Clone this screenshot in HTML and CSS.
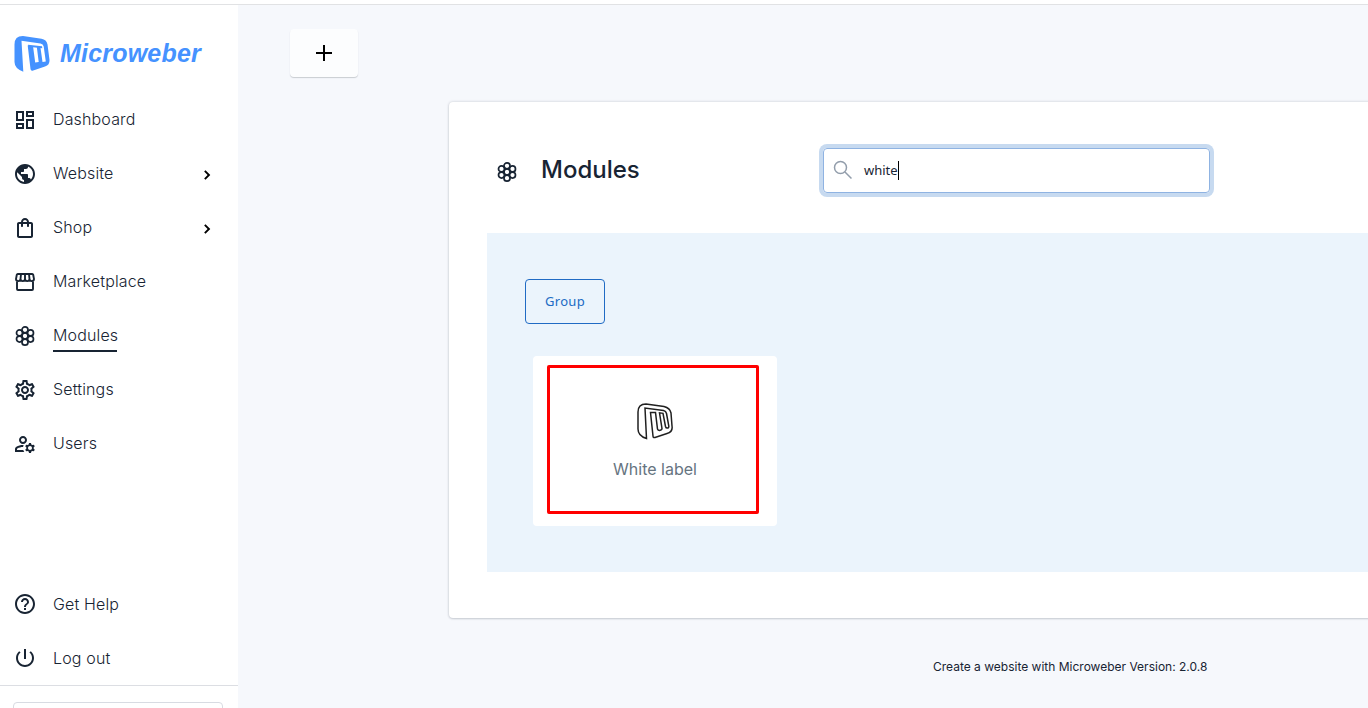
FILE: index.html
```html
<!DOCTYPE html>
<html lang="en">
<head>
<meta charset="utf-8">
<title>Modules - Microweber</title>
<link rel="stylesheet" href="styles.css">
</head>
<body>
<svg class="defs" aria-hidden="true">
  <symbol id="flower" viewBox="0 0 24 24"><g fill="none" stroke="currentColor" stroke-width="1.700"><circle cx="12" cy="12" r="3"/><circle cx="12" cy="5.850" r="3"/><circle cx="12" cy="18.150" r="3"/><circle cx="6.500" cy="8.900" r="3"/><circle cx="17.500" cy="8.900" r="3"/><circle cx="6.500" cy="15.100" r="3"/><circle cx="17.500" cy="15.100" r="3"/></g></symbol>
  <symbol id="chevron" viewBox="0 0 24 24"><path d="M8.200 16.600 12.800 12 8.200 7.400 10 5.600l6.400 6.400-6.400 6.400z"/></symbol>
  <symbol id="mark" viewBox="0 0 36 37"><path d="M9.500 35.500Q1 33 1 26V9Q1 1 9 1L27 3.500Q33 5 34 10L35 23Q36 29 30 30.500L18 34.500Q16 35 16 33L13.500 9.500H18.500L20.500 26Q21 27.500 22.500 27.500Q25 27 25 25.500L22.500 9.800L26 10.300L28.500 23.500Q29 25.500 31 25Q32 24.500 31.800 23L29.500 10.500Q29 8 26.500 7.500L8 5Z"/></symbol>
</svg>
<div class="topline"></div>
<div class="app">
  <aside class="sidebar">
    <div class="brand">
      <svg class="brand-mark" viewBox="0 0 36 37"><path d="M9.300 35.700Q.5 32.500.5 26V8.500Q.5 0 9 .1L27.500 2.700Q32.500 3.500 33.500 8.500L35.500 24Q35.800 29 31 30.500L18.500 34.700Q16.700 35 16.500 33L13.700 9.500 19 10 21.200 26.500 24.700 26 22.700 10 26.300 10.500 28.500 26 31.800 25.500 29.700 10.500Q29.200 8 26.500 7.500L7.500 4.800Z"/><path d="M14 8.700l14 1.500.3 2-14-1.500z"/></svg>
      <span class="brand-name">Microweber</span>
    </div>
    <nav class="nav">
      <a class="item"><svg class="icon" viewBox="0 0 24 24"><path d="M19 5v2h-4V5h4M9 5v6H5V5h4m10 8v6h-4v-6h4M9 17v2H5v-2h4M21 3h-8v6h8V3zM11 3H3v10h8V3zm10 8h-8v10h8V11zm-10 4H3v6h8v-6z"/></svg><span>Dashboard</span></a>
      <a class="item"><svg class="icon" viewBox="0 0 24 24"><path d="M12 2C6.480 2 2 6.480 2 12s4.480 10 10 10 10-4.480 10-10S17.520 2 12 2zm-1 17.930c-3.950-.49-7-3.850-7-7.930 0-.62.080-1.210.21-1.790L9 15v1c0 1.100.9 2 2 2v1.930zm6.900-2.540c-.26-.81-1-1.390-1.900-1.390h-1v-3c0-.55-.45-1-1-1H8v-2h2c.55 0 1-.45 1-1V7h2c1.100 0 2-.9 2-2v-.41c2.930 1.190 5 4.060 5 7.410 0 2.080-.8 3.970-2.100 5.390z"/></svg><span>Website</span><svg class="arrow"><use href="#chevron"/></svg></a>
      <a class="item"><svg class="icon" viewBox="0 0 24 24"><path d="M18 6h-2c0-2.210-1.790-4-4-4S8 3.790 8 6H6c-1.100 0-2 .9-2 2v12c0 1.100.9 2 2 2h12c1.100 0 2-.9 2-2V8c0-1.100-.9-2-2-2zm-6-2c1.100 0 2 .9 2 2h-4c0-1.100.9-2 2-2zm6 16H6V8h2v2c0 .55.45 1 1 1s1-.45 1-1V8h4v2c0 .55.45 1 1 1s1-.45 1-1V8h2v12z"/></svg><span>Shop</span><svg class="arrow"><use href="#chevron"/></svg></a>
      <a class="item"><svg class="icon" viewBox="0 0 24 24"><g fill="none" stroke="currentColor" stroke-width="1.900"><path d="M4 11.500V19q0 1 1 1h14q1 0 1-1v-7.500"/><path d="M4.800 4h14.400q.8 0 1 .8l.8 4.200c0 2.800-4.500 2.800-4.500 0 0 2.800-4.500 2.800-4.500 0 0 2.800-4.500 2.800-4.500 0 0 2.800-4.500 2.800-4.500 0l.8-4.200q.2-.8 1-.8zM8 4l-.5 5M12 4v5M16 4l.5 5"/></g></svg><span>Marketplace</span></a>
      <a class="item active"><svg class="icon"><use href="#flower"/></svg><span>Modules</span></a>
      <a class="item"><svg class="icon" viewBox="0 0 24 24"><path d="M19.430 12.980c.040-.32.070-.64.070-.98s-.030-.66-.070-.98l2.110-1.650c.19-.15.24-.42.120-.64l-2-3.460c-.12-.22-.39-.3-.61-.22l-2.490 1c-.52-.4-1.080-.73-1.690-.98l-.38-2.650C14.460 2.180 14.250 2 14 2h-4c-.25 0-.46.18-.49.42l-.38 2.650c-.61.25-1.170.59-1.690.98l-2.490-1c-.23-.09-.49 0-.61.22l-2 3.460c-.13.22-.07.49.12.64l2.110 1.650c-.04.32-.07.65-.07.98s.03.66.07.98l-2.110 1.650c-.19.15-.24.42-.12.64l2 3.460c.12.22.39.3.61.22l2.490-1c.52.4 1.080.73 1.690.98l.38 2.650c.03.24.24.42.49.42h4c.25 0 .46-.18.49-.42l.38-2.650c.61-.25 1.170-.59 1.690-.98l2.490 1c.23.09.49 0 .61-.22l2-3.460c.12-.22.07-.49-.12-.64l-2.110-1.650zm-1.980-1.710c.04.31.05.52.05.73s-.02.43-.05.73l-.14 1.130.89.7 1.080.84-.7 1.210-1.270-.51-1.040-.42-.9.680c-.43.32-.84.56-1.250.73l-1.060.43-.16 1.130-.2 1.350h-1.400l-.19-1.350-.16-1.130-1.060-.43c-.43-.18-.83-.41-1.230-.71l-.91-.7-1.060.43-1.270.51-.7-1.210 1.080-.84.89-.7-.14-1.130c-.03-.31-.05-.54-.05-.74s.02-.43.05-.73l.14-1.130-.89-.7-1.080-.84.7-1.210 1.270.51 1.040.42.9-.68c.43-.32.84-.56 1.250-.73l1.060-.43.16-1.130.2-1.350h1.390l.19 1.350.16 1.130 1.060.43c.43.18.83.41 1.230.71l.91.7 1.060-.43 1.270-.51.7 1.210-1.070.85-.89.7.14 1.130zM12 8c-2.210 0-4 1.790-4 4s1.790 4 4 4 4-1.790 4-4-1.790-4-4-4zm0 6c-1.100 0-2-.9-2-2s.9-2 2-2 2 .9 2 2-.9 2-2 2z"/></svg><span>Settings</span></a>
      <a class="item"><svg class="icon" viewBox="0 0 24 24"><path d="M4 18v-.65c0-.34.16-.66.41-.81C6.100 15.530 8.030 15 10 15c.03 0 .05 0 .08.010.1-.7.3-1.370.59-1.980-.22-.02-.44-.03-.67-.03-2.420 0-4.680.67-6.610 1.820-.88.52-1.390 1.500-1.390 2.530V20h9.260c-.42-.6-.75-1.280-.97-2H4zM10 12c2.210 0 4-1.790 4-4s-1.790-4-4-4-4 1.790-4 4 1.790 4 4 4zm0-6c1.100 0 2 .9 2 2s-.9 2-2 2-2-.9-2-2 .9-2 2-2zM20.750 16c0-.22-.03-.42-.06-.63l1.140-1.010-1-1.730-1.450.49c-.32-.27-.68-.48-1.080-.63L18 11h-2l-.3 1.490c-.4.150-.76.36-1.080.63l-1.450-.49-1 1.730 1.140 1.010c-.03.21-.06.41-.06.63s.03.42.06.63l-1.140 1.010 1 1.730 1.450-.49c.32.27.68.48 1.080.63L16 21h2l.3-1.490c.4-.15.76-.36 1.080-.63l1.450.49 1-1.730-1.140-1.010c.03-.21.06-.41.06-.63zM17 18c-1.100 0-2-.9-2-2s.9-2 2-2 2 .9 2 2-.9 2-2 2z"/></svg><span>Users</span></a>
    </nav>
    <nav class="nav nav-bottom">
      <a class="item"><svg class="icon" viewBox="0 0 24 24"><path d="M11 18h2v-2h-2v2zm1-16C6.480 2 2 6.480 2 12s4.480 10 10 10 10-4.480 10-10S17.520 2 12 2zm0 18c-4.410 0-8-3.590-8-8s3.590-8 8-8 8 3.590 8 8-3.590 8-8 8zm0-14c-2.210 0-4 1.790-4 4h2c0-1.100.9-2 2-2s2 .9 2 2c0 2-3 1.750-3 5h2c0-2.250 3-2.500 3-5 0-2.210-1.790-4-4-4z"/></svg><span>Get Help</span></a>
      <a class="item"><svg class="icon" viewBox="0 0 24 24"><path d="M13 3h-2v10h2V3zm4.830 2.170-1.420 1.420C17.990 7.860 19 9.810 19 12c0 3.870-3.130 7-7 7s-7-3.130-7-7c0-2.190 1.010-4.140 2.580-5.420L6.170 5.170C4.230 6.820 3 9.260 3 12c0 4.970 4.030 9 9 9s9-4.030 9-9c0-2.740-1.230-5.180-3.170-6.830z"/></svg><span>Log out</span></a>
    </nav>
    <div class="sidebar-foot"><div class="foot-box"></div></div>
  </aside>
  <main class="main">
    <button class="add" aria-label="Add"><svg class="plus" viewBox="0 0 16 16"><path d="M7 0h2v7h7v2H9v7H7V9H0V7h7z"/></svg></button>
    <section class="card">
      <header class="card-head">
        <svg class="head-icon"><use href="#flower"/></svg>
        <h1 class="title">Modules</h1>
        <div class="search">
          <svg class="glass" viewBox="0 0 20 20"><g fill="none" stroke="currentColor" stroke-width="1.500"><circle cx="7.500" cy="7.500" r="6"/><path d="M12 12l6.500 6.500"/></g></svg>
          <span class="query">white</span><span class="caret"></span>
        </div>
      </header>
      <div class="panel">
        <button class="group">Group</button>
        <div class="module">
          <div class="highlight"></div>
          <svg class="module-mark"><use href="#mark"/></svg>
          <span class="module-name">White label</span>
        </div>
      </div>
    </section>
    <footer class="footer">Create a website with Microweber Version: 2.0.8</footer>
  </main>
</div>
</body>
</html>
```
FILE: styles.css
```css
* { box-sizing: border-box; }
body { margin: 0; height: 708px; overflow: hidden; background: #fff; color: #182433; font-family: Inter, sans-serif; display: flex; flex-direction: column; }
button { font: inherit; }
.defs { display: none; }
.topline { height: 5px; flex: none; border-bottom: 1px solid #e1e2e4; }
.app { display: flex; flex: 1; min-height: 0; }
.sidebar { width: 238px; flex: none; display: flex; flex-direction: column; padding-top: 31px; background: #fff; }
.brand { display: flex; height: 37px; padding-left: 14px; color: #4592ff; }
.brand-mark { width: 36px; height: 37px; fill: currentColor; }
.brand-name { margin-left: 10px; font: italic bold 25px/35px "Liberation Sans", Arial, sans-serif; letter-spacing: .2px; }
.nav { margin-top: 20px; }
.item { display: flex; align-items: center; height: 54px; padding-left: 13px; font-size: 16px; font-weight: 300; line-height: 24px; letter-spacing: .15px; }
.item span { margin: 0 0 2px 16px; }
.icon { width: 24px; height: 24px; flex: none; fill: currentColor; }
.arrow { width: 18px; height: 18px; margin: 2px 22px 0 auto; color: #000; fill: #000; }
.active span { width: 64px; height: 34px; padding-top: 5px; border-bottom: 2px solid #182433; white-space: nowrap; }
.nav-bottom { margin-top: 106px; }
.nav-bottom .item span { margin-bottom: 0; }
.sidebar-foot { margin-top: auto; height: 23px; border-top: 1px solid #dcdee3; padding: 16px 15px 0 13px; overflow: hidden; }
.foot-box { height: 40px; border: 1px solid #d8dbe2; border-radius: 4px; }
.main { flex: 1; min-width: 0; background: #f6f8fc; padding: 24px 0 0 210px; overflow: hidden; }
.add { display: flex; align-items: center; justify-content: center; width: 68px; height: 48px; margin-left: -158px; border: 0; padding: 0; border-radius: 4px; background: #fcfdfe; box-shadow: 0 1px 1px #c9ccd1; }
.plus { width: 16px; height: 16px; }
.card { width: 940px; height: 516px; margin: 25px 0 0 1px; padding: 43px 0 0 38px; background: #fff; border-radius: 4px; box-shadow: 0 0 3px rgba(24, 36, 51, .2), 0 1px 2px rgba(24, 36, 51, .13); }
.card-head { display: flex; align-items: center; height: 51px; }
.head-icon { width: 24px; height: 24px; margin: 2px 0 0 8px; fill: currentColor; }
.title { width: 282px; margin: 0 0 2px 22px; font-size: 24px; line-height: 32px; font-weight: 500; }
.search { display: flex; align-items: center; width: 387px; height: 45px; border: 1px solid #8fb3e2; border-radius: 4px; box-shadow: 0 0 0 4px #c7daf0; padding-left: 9px; }
.glass { width: 20px; height: 20px; margin-bottom: 2px; color: #929dab; }
.query { margin: 0 0 1px 11px; font: 13px/20px "Noto Sans", sans-serif; }
.caret { width: 1px; height: 19px; margin-bottom: 1px; background: #000; }
.panel { height: 339px; margin-top: 37px; padding: 46px 0 0 38px; background: #ebf4fc; }
.group { display: block; width: 80px; height: 45px; padding: 0 0 1px; border: 1px solid #206bc4; border-radius: 4px; background: transparent; color: #206bc4; font: 13px/20px "Noto Sans", sans-serif; letter-spacing: .3px; }
.module { position: relative; display: flex; flex-direction: column; align-items: center; width: 244px; height: 170px; margin: 32px 0 0 8px; padding-top: 47px; background: #fff; border-radius: 4px; }
.highlight { position: absolute; left: 14px; top: 9px; width: 212px; height: 149px; border: 3px solid #f00; border-radius: 2px; }
.module-mark { width: 36px; height: 37px; fill: none; stroke: #202020; stroke-width: 1.5; }
.module-name { margin-top: 17px; color: #66747f; font-size: 16px; line-height: 24px; font-weight: 400; }
.footer { margin: 41px 0 0 485px; font-size: 12px; line-height: 16px; white-space: nowrap; }
```
